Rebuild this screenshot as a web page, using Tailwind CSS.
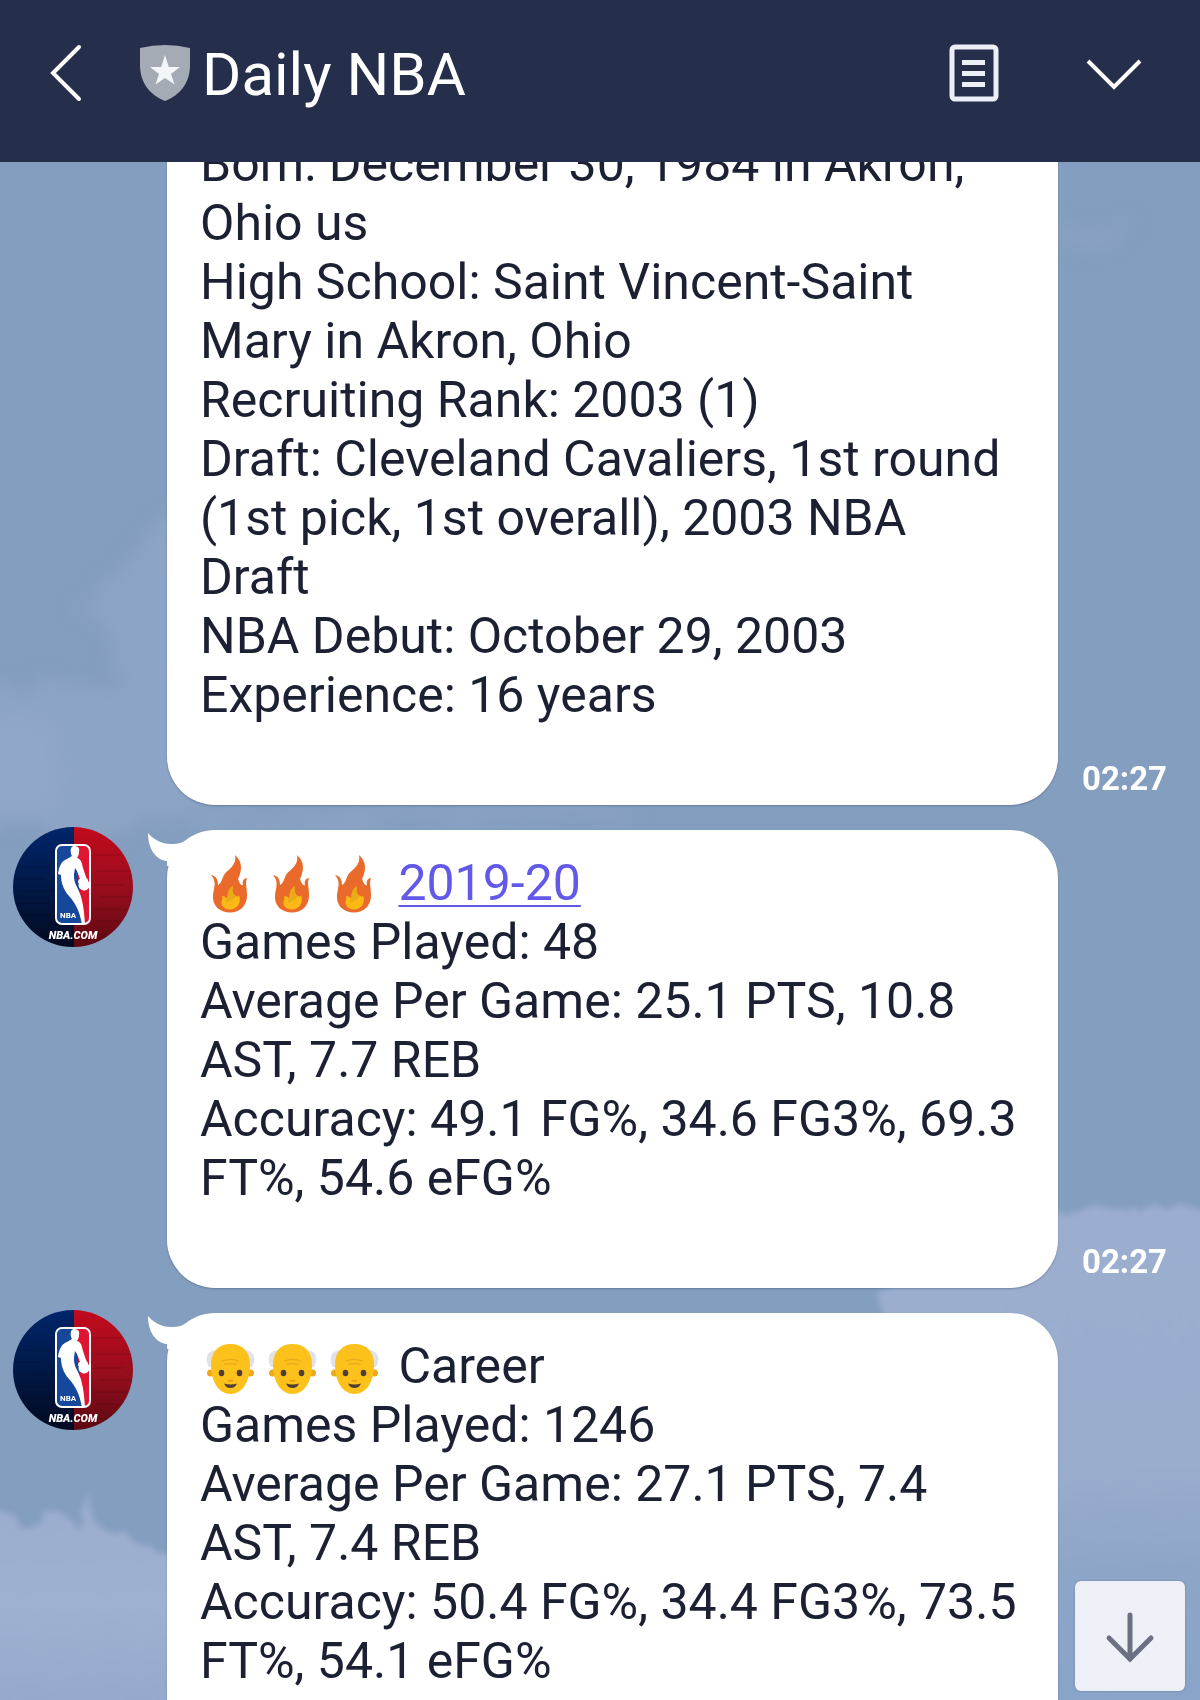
<!DOCTYPE html>
<html lang="en">
<head>
<meta charset="utf-8">
<meta name="viewport" content="width=device-width, initial-scale=1">
<title>Daily NBA</title>
<script src="https://cdn.jsdelivr.net/npm/@tailwindcss/browser@4"></script>
</head>
<body class="flex h-screen flex-col overflow-hidden bg-[#849ebf] font-[Roboto,sans-serif] text-[#1c2033]">

<!-- Shared drawings -->
<svg class="absolute size-0" aria-hidden="true">
  <defs>
    <linearGradient id="navy" x1="0" y1="0" x2="0" y2="1">
      <stop offset="0" stop-color="#00256a"/><stop offset=".45" stop-color="#001a4a"/><stop offset="1" stop-color="#020a20"/>
    </linearGradient>
    <linearGradient id="crimson" x1="0" y1="0" x2="0" y2="1">
      <stop offset="0" stop-color="#c20a1e"/><stop offset=".55" stop-color="#950d1c"/><stop offset="1" stop-color="#5c0812"/>
    </linearGradient>
    <clipPath id="disc"><circle cx="60" cy="60" r="60"/></clipPath>
    <clipPath id="badge"><rect x="43" y="18" width="34" height="79" rx="6"/></clipPath>
  </defs>
  <symbol id="avatar" viewBox="0 0 120 120">
    <g clip-path="url(#disc)">
      <rect width="61" height="120" fill="url(#navy)"/>
      <rect x="61" width="59" height="120" fill="url(#crimson)"/>
      <g stroke="#000" stroke-opacity=".16" stroke-width="1" fill="none">
        <path d="M4 40h34M2 52h28M8 64h32M2 76h36M10 88h30M80 28h28M84 44h36M80 58h30M86 70h32M80 82h34M82 94h24"/>
      </g>
    </g>
    <g clip-path="url(#badge)">
      <rect x="42" y="17" width="36" height="81" fill="#15479a"/>
      <path d="M62 17H78V98H72L66 60Z" fill="#df1633"/>
      <path d="M61 19C65 19 67 21 66 25C66 28 65 29 64 31C68 32 69 36 70 41L73 50C74 52 75 52 75 54A5.500 5.500 0 1 1 66 56C64 57 65 52 67 52L64 44L62 41C61 47 60 51 63 58C68 67 71 77 72 98H69C67 84 62 76 56 69C50 62 48 55 48 48L45 47C46 40 48 34 54 32L59 29C57 26 57 19 61 19Z" fill="#fff"/>
    </g>
    <rect x="43" y="18" width="34" height="79" rx="6" fill="none" stroke="#fff" stroke-width="2"/>
    <text x="47" y="91" font-size="8" font-weight="700" fill="#fff">NBA</text>
    <text x="60" y="112" text-anchor="middle" font-size="11" font-weight="900" font-style="italic" fill="#fff">NBA.COM</text>
  </symbol>
  <symbol id="fire" viewBox="0 0 62 59">
    <path d="M35 1C43 8 42 17 38 25C40 30 41 32 43 31C42 27 44 24 47 24C45 29 47 34 47 41C47 52 40 58.500 30 58.500C20 58.500 12 52 13 41C14 33 17 28 11 21C17 22 18 27 18 31C21 30 22 25 24 21C28 15 37 12 35 1Z" fill="#e96a2b"/>
    <path d="M33 32C32 38 33 40 36 42C38 43 39 42 39 41C42 49 37 55.500 30 55.500C23 55.500 20 50 22 46C23 44 22 43 22 42C25 42 26 44 27 44C28 39 28 35 33 32Z" fill="#fdb913"/>
    <path d="M33 32C32 38 33 40 36 42C34 46 30 46 27 49C25 47 26 45 27 44C28 39 28 35 33 32Z" fill="#d9a01c" opacity=".55"/>
  </symbol>
  <symbol id="elder" viewBox="0 0 62 59">
    <path d="M17 13C7 13 4 22 9 30H17ZM44 13C54 13 57 22 52 30H44Z" fill="#e2e1e6"/>
    <circle cx="10.500" cy="36" r="3.500" fill="#eda81b"/><circle cx="50.500" cy="36" r="3.500" fill="#eda81b"/>
    <path d="M30.500 7C43 7 50 15 50 28C50 45 42 57 30.500 57C19 57 11 45 11 28C11 15 18 7 30.500 7Z" fill="#fcc21b"/>
    <path d="M22 24C27 22 34 22 39 24M24 27.500C28 26.500 33 26.500 37 27.500" stroke="#eda81b" stroke-width="1.200" fill="none"/>
    <ellipse cx="21.500" cy="36" rx="2.800" ry="3.200" fill="#513f35"/><ellipse cx="39.500" cy="36" rx="2.800" ry="3.200" fill="#513f35"/>
    <path d="M28 43Q30.500 45 33 43" stroke="#e59a14" stroke-width="1.500" fill="none"/>
    <path d="M24 46.500Q30.500 48.500 37 46.500Q35 51 30.500 51Q26 51 24 46.500Z" fill="#513f35"/>
  </symbol>
  <symbol id="tail" viewBox="0 0 44 36">
    <path d="M1 3C6 9 14 14 24 14C31 14 36 13 43 8V36H20V31C9 30 1 19 1 3Z" fill="#fff"/>
  </symbol>
</svg>

<header class="z-10 flex h-[162px] shrink-0 items-center bg-[#252e4a] pb-4 pr-14 pl-12 text-white">
  <button type="button" aria-label="Back" class="shrink-0">
    <svg class="h-16 w-9" viewBox="0 0 36 64" fill="none" stroke="#fff" stroke-width="4" stroke-linecap="round" stroke-linejoin="miter"><path d="M31 6L5 32L31 58"/></svg>
  </button>
  <svg class="ml-14 h-14 w-[50px] shrink-0" viewBox="0 0 50 56" aria-hidden="true">
    <path d="M0 3Q25-3 50 3V20C50 38 40 50 25 56C10 50 0 38 0 20Z" fill="#a5abb5"/>
    <path d="M25 10L28.800 22H40L31 29L34.500 39.500L25 33L15.500 39.500L19 29L10 22H21.200Z" fill="#f4f5f8"/>
  </svg>
  <h1 class="ml-3 flex-1 truncate pt-1 text-[60px] leading-[72px]">Daily NBA</h1>
  <button type="button" aria-label="Notes" class="shrink-0">
    <svg class="h-[58px] w-[50px]" viewBox="0 0 50 58" fill="none" stroke="#eceff6" stroke-width="5"><rect x="3" y="3" width="44" height="52" rx="3"/><path d="M13 18.500H36M13 29.500H36M13 40.500H36" stroke-width="5"/></svg>
  </button>
  <button type="button" aria-label="Menu" class="ml-[85px] shrink-0">
    <svg class="h-[58px] w-[60px]" viewBox="0 0 60 58" fill="none" stroke="#fff" stroke-width="4"><path d="M4 17L30 43L56 17"/></svg>
  </button>
</header>

<main class="relative min-h-0 flex-1 overflow-hidden">
  <!-- Sky wallpaper -->
  <svg class="absolute inset-0 size-full" viewBox="0 162 1200 1538" preserveAspectRatio="none" aria-hidden="true">
    <defs>
      <filter id="wisp" x="-20%" y="-20%" width="140%" height="140%" color-interpolation-filters="sRGB">
        <feTurbulence type="fractalNoise" baseFrequency=".02" numOctaves="3" seed="4"/>
        <feDisplacementMap in="SourceGraphic" xChannelSelector="R" yChannelSelector="G" scale="60"/>
        <feGaussianBlur stdDeviation="9"/>
      </filter>
      <filter id="edge" x="-5%" y="-5%" width="110%" height="110%" color-interpolation-filters="sRGB">
        <feTurbulence type="fractalNoise" baseFrequency=".04" numOctaves="3" seed="8"/>
        <feDisplacementMap in="SourceGraphic" xChannelSelector="R" yChannelSelector="G" scale="20"/>
        <feGaussianBlur stdDeviation="3"/>
      </filter>
      <linearGradient id="right" x1="0" y1="0" x2="0" y2="1">
        <stop offset="0" stop-color="#9caecf"/><stop offset=".5" stop-color="#9aadcd"/><stop offset=".72" stop-color="#8da5c7"/><stop offset="1" stop-color="#89a3c9"/>
      </linearGradient>
      <linearGradient id="left" x1="0" y1="0" x2="0" y2="1">
        <stop offset="0" stop-color="#9aadcd"/><stop offset=".5" stop-color="#9fb1d0"/><stop offset="1" stop-color="#93a8cb"/>
      </linearGradient>
    </defs>
    <g filter="url(#wisp)" fill="#93a9ca">
      <path d="M190 520L130 540L100 590L60 610L110 630L120 690L60 680L20 690L-30 680V830L80 850L200 800Z" opacity=".55"/>
      <path d="M-30 720L30 700L70 760L60 820L-30 840Z" opacity=".6"/>
      <path d="M1040 215L1100 225L1150 226L1110 248L1050 240Z" opacity=".4"/>
      <path d="M160 808L620 800L630 826L160 830Z" opacity=".4"/>
    </g>
    <path filter="url(#edge)" d="M880 1290L960 1260L1000 1216L1058 1214L1110 1206L1140 1210L1165 1203L1230 1214V1720H880Z" fill="url(#right)"/>
    <path filter="url(#edge)" d="M-20 1505L10 1513L25 1530L45 1512L65 1516L80 1528L90 1490L100 1528L130 1541L180 1556V1720H-20Z" fill="url(#left)"/>
  </svg>

  <div class="relative -mt-[51px] flex flex-col gap-[25px] text-[50px] leading-[59px]">
    <article class="flex pl-[167px]">
      <p class="min-w-0 flex-1 rounded-[48px] bg-white pt-6 pr-10 pb-20 pl-[33px] shadow-[0_1px_2px_rgba(40,60,100,0.35)]">
        Born: December 30, 1984 in Akron, Ohio us<br>
        High School: Saint Vincent-Saint Mary in Akron, Ohio<br>
        Recruiting Rank: 2003 (1)<br>
        Draft: Cleveland Cavaliers, 1st round (1st pick, 1st overall), 2003 NBA Draft<br>
        NBA Debut: October 29, 2003<br>
        Experience: 16 years
      </p>
      <time class="w-[142px] shrink-0 self-end pb-1.5 pl-6 text-[33px] leading-10 font-bold text-white">02:27</time>
    </article>

    <article class="flex">
      <svg class="-mt-[3px] mr-[34px] ml-[13px] size-[120px] shrink-0" role="img" aria-label="NBA.COM"><use href="#avatar"/></svg>
      <div class="relative min-w-0 flex-1 rounded-[48px] bg-white pt-6 pr-10 pb-20 pl-[33px] shadow-[0_1px_2px_rgba(40,60,100,0.35)]">
        <svg class="absolute top-0 -left-5 h-9 w-11" aria-hidden="true"><use href="#tail"/></svg>
        <p class="relative">
          <span class="inline-flex align-top" role="img" aria-label="fire"><svg class="h-[59px] w-[62px]"><use href="#fire"/></svg><svg class="h-[59px] w-[62px]"><use href="#fire"/></svg><svg class="h-[59px] w-[62px]"><use href="#fire"/></svg></span>
          <a href="#season" class="text-[#6259e8] underline decoration-2 underline-offset-[5px]">2019-20</a><br>
          Games Played: 48<br>
          Average Per Game: 25.1 PTS, 10.8 AST, 7.7 REB<br>
          Accuracy: 49.1 FG%, 34.6 FG3%, 69.3 FT%, 54.6 eFG%
        </p>
      </div>
      <time class="w-[142px] shrink-0 self-end pb-1.5 pl-6 text-[33px] leading-10 font-bold text-white">02:27</time>
    </article>

    <article class="flex">
      <svg class="-mt-[3px] mr-[34px] ml-[13px] size-[120px] shrink-0" role="img" aria-label="NBA.COM"><use href="#avatar"/></svg>
      <div class="relative mr-[142px] min-w-0 flex-1 rounded-[48px] bg-white pt-6 pr-10 pb-20 pl-[33px] shadow-[0_1px_2px_rgba(40,60,100,0.35)]">
        <svg class="absolute top-0 -left-5 h-9 w-11" aria-hidden="true"><use href="#tail"/></svg>
        <p class="relative">
          <span class="inline-flex align-top" role="img" aria-label="old man"><svg class="h-[59px] w-[62px]"><use href="#elder"/></svg><svg class="h-[59px] w-[62px]"><use href="#elder"/></svg><svg class="h-[59px] w-[62px]"><use href="#elder"/></svg></span>
          Career<br>
          Games Played: 1246<br>
          Average Per Game: 27.1 PTS, 7.4 AST, 7.4 REB<br>
          Accuracy: 50.4 FG%, 34.4 FG3%, 73.5 FT%, 54.1 eFG%
        </p>
      </div>
    </article>
  </div>

  <button type="button" aria-label="Scroll to latest" class="absolute right-[15px] bottom-[9px] flex size-[110px] items-center justify-center rounded-md bg-[#edf1f7] shadow-[0_0_2px_rgba(40,60,100,0.4)]">
    <svg class="size-14" viewBox="0 0 56 56" fill="none" stroke="#6b7083" stroke-width="5" stroke-linecap="round"><path d="M28 7V51M7 30L28 51L49 30"/></svg>
  </button>
</main>
</body>
</html>
